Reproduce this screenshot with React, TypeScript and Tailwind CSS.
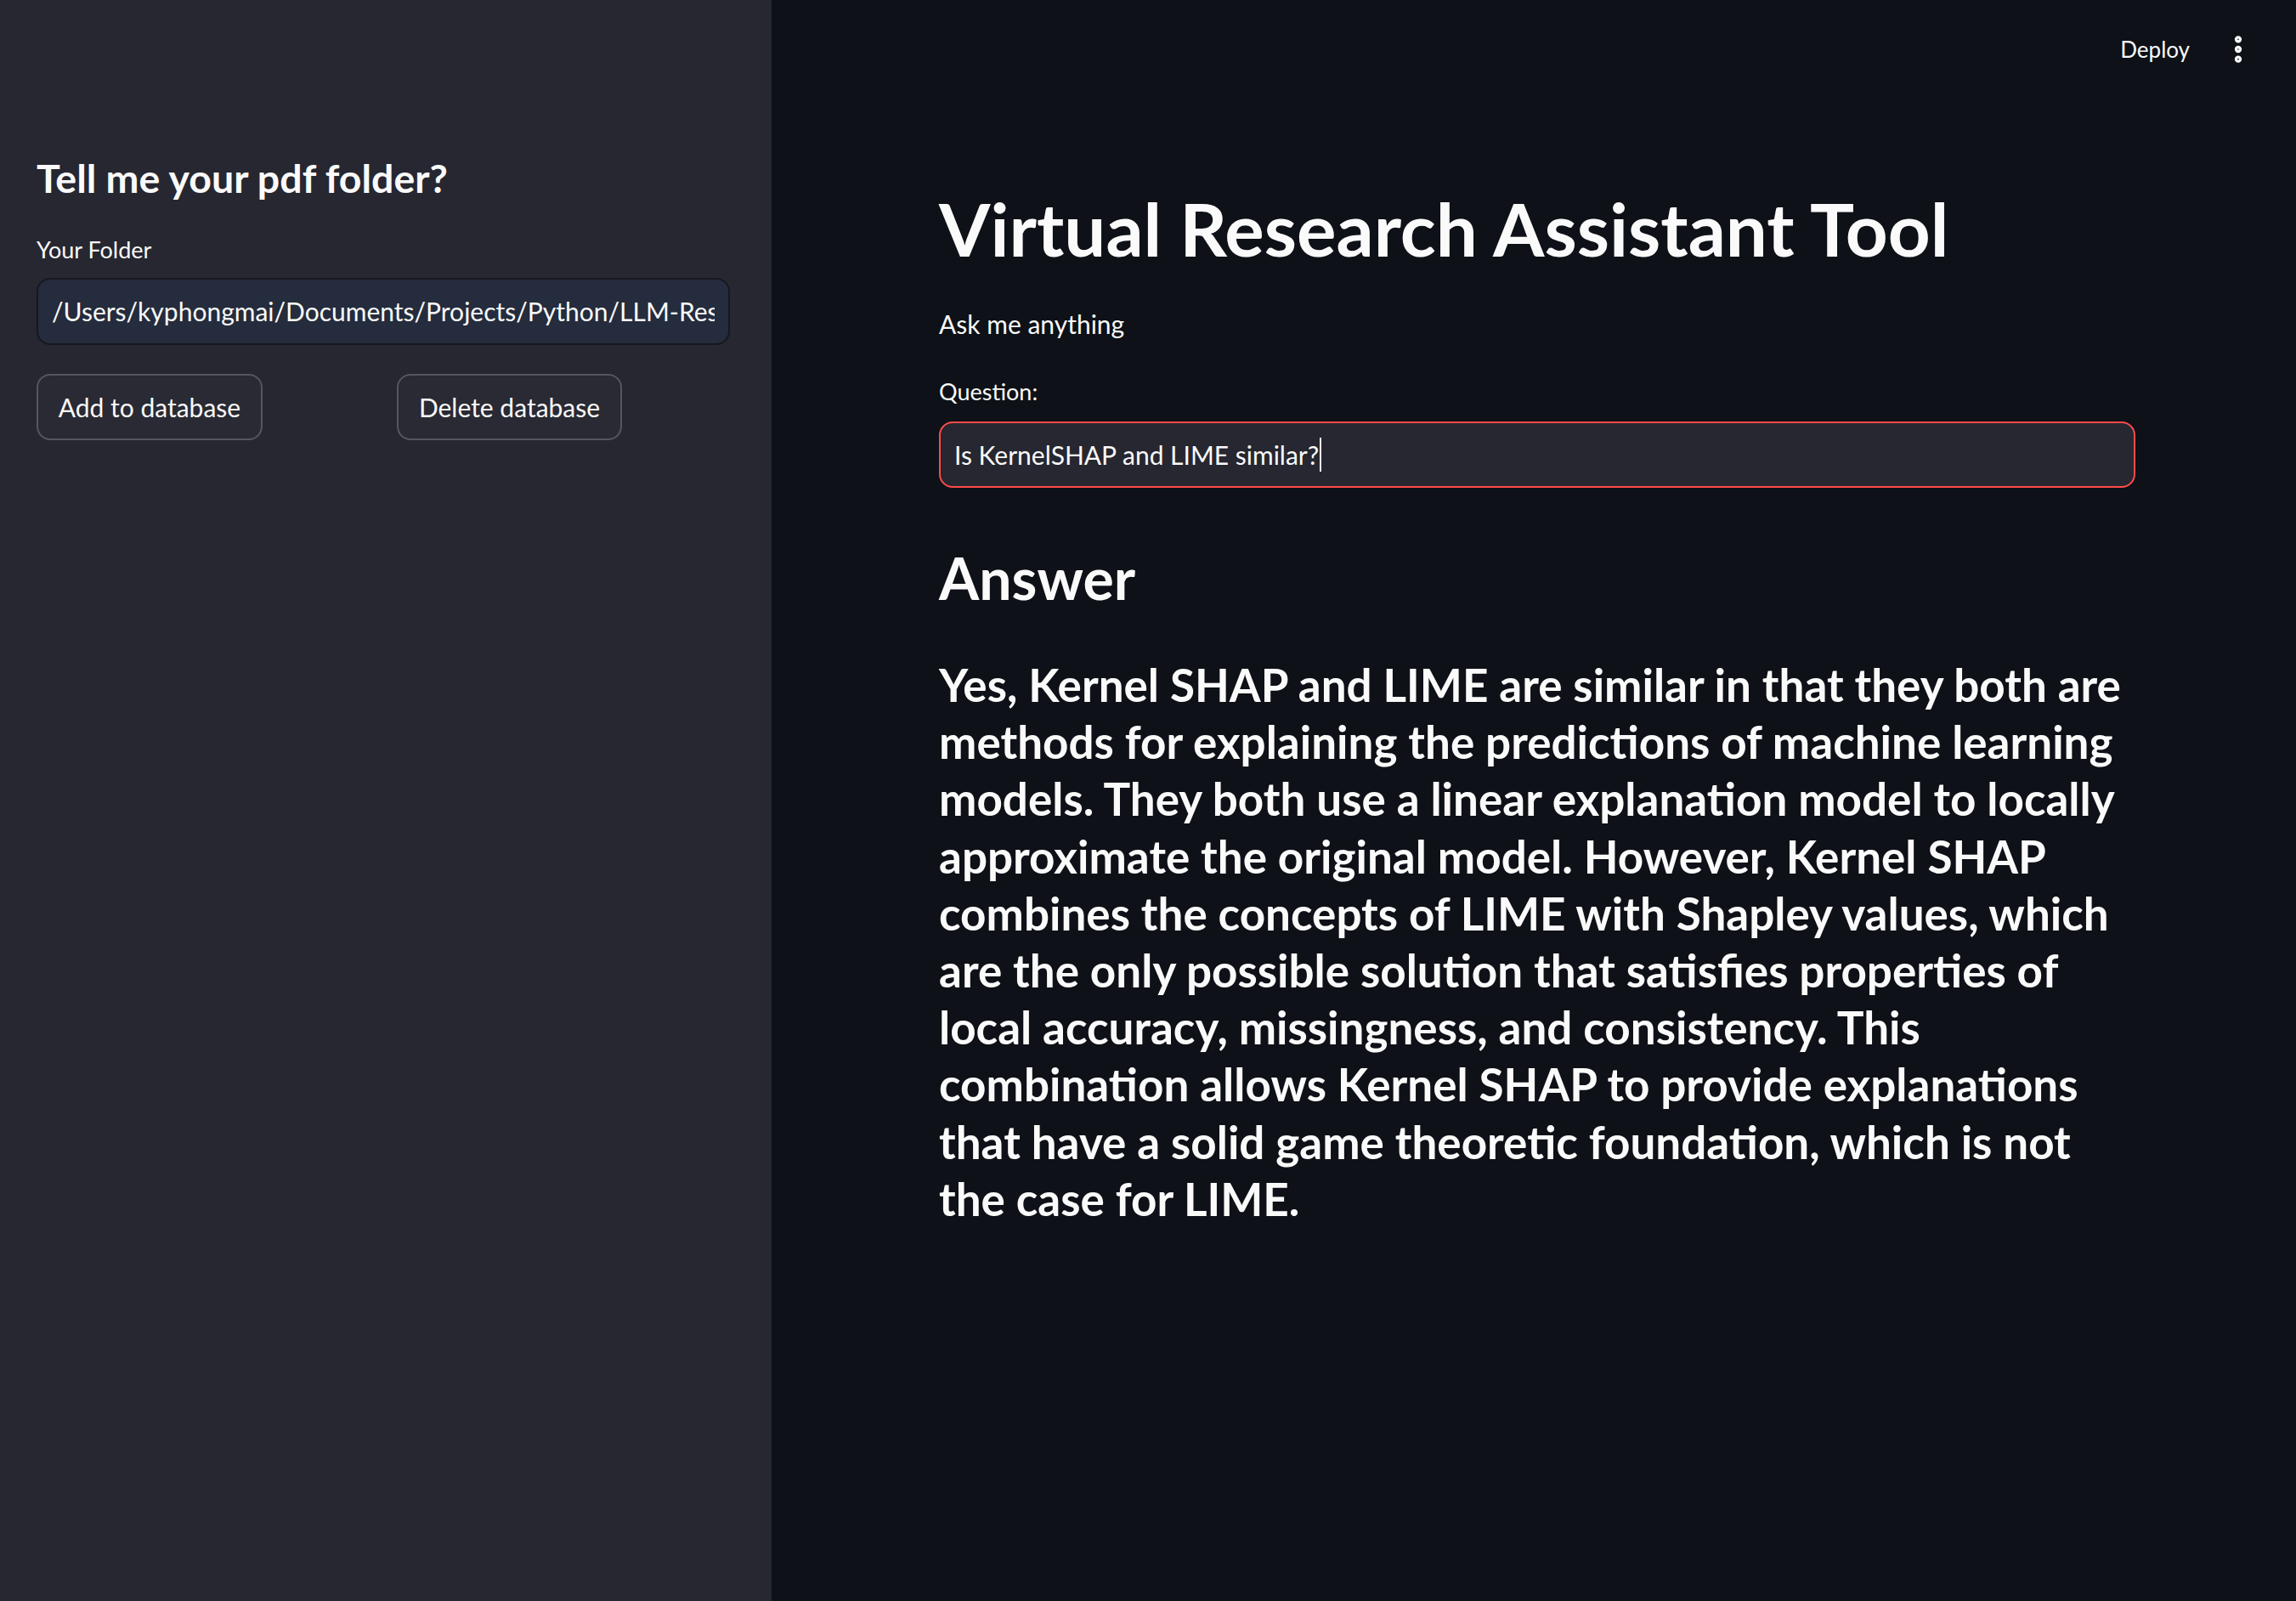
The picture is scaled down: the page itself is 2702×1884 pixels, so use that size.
import { EllipsisVertical } from "lucide-react";

const answerLines = [
  "Yes, Kernel SHAP and LIME are similar in that they both are",
  "methods for explaining the predictions of machine learning",
  "models. They both use a linear explanation model to locally",
  "approximate the original model. However, Kernel SHAP",
  "combines the concepts of LIME with Shapley values, which",
  "are the only possible solution that satisfies properties of",
  "local accuracy, missingness, and consistency. This",
  "combination allows Kernel SHAP to provide explanations",
  "that have a solid game theoretic foundation, which is not",
  "the case for LIME.",
];

function Sidebar() {
  return (
    <aside className="w-[908px] shrink-0 bg-[#262730] pl-[43px] pr-[49px] pt-[180px]">
      <h2 className="text-[46.5px] font-bold leading-[58px] text-[#fafafa]">
        Tell me your pdf folder?
      </h2>

      <label className="mt-[36px] block text-[27px] leading-[40px] text-[#fafafa]">
        Your Folder
      </label>
      <div className="mt-[13px] flex h-[79px] items-center rounded-[16px] border-2 border-[#17181f] bg-[#242c3d] px-[16px]">
        <div className="overflow-hidden whitespace-nowrap text-[30px] text-[#fafafa]">
          /Users/kyphongmai/Documents/Projects/Python/LLM-Research-Assistant/papers
        </div>
      </div>

      {/* two streamlit columns */}
      <div className="mt-[34px] grid grid-cols-2 gap-x-[32px]">
        <div>
          <button className="flex h-[78px] w-[266px] items-center justify-center rounded-[16px] border-2 border-[#55565e] bg-[#292a33] text-[30px] text-[#fafafa]">
            Add to database
          </button>
        </div>
        <div>
          <button className="flex h-[78px] w-[265px] items-center justify-center rounded-[16px] border-2 border-[#55565e] bg-[#292a33] text-[30px] text-[#fafafa]">
            Delete database
          </button>
        </div>
      </div>
    </aside>
  );
}

export default function App() {
  return (
    <div className="flex h-screen w-full font-['Lato','Liberation_Sans',sans-serif] antialiased">
      <Sidebar />

      <main className="flex min-w-0 flex-1 flex-col bg-[#0e1117] text-[#fafafa]">
        {/* Header */}
        <div className="flex h-[116px] items-center justify-end gap-[37px] pr-[48px]">
          <span className="text-[26px] leading-[40px]">Deploy</span>
          <EllipsisVertical className="h-[40px] w-[40px]" strokeWidth={3} />
        </div>

        {/* Content */}
        <div className="ml-[197px] w-[1408px]">
          <h1 className="mt-[103px] whitespace-nowrap text-[87px] font-bold leading-[100px]">
            Virtual Research Assistant Tool
          </h1>

          <p className="mt-[38px] text-[30px] leading-[48px]">Ask me anything</p>

          <label className="mt-[36px] block text-[27px] leading-[40px]">Question:</label>
          <div className="mt-[15px] flex h-[78px] items-center rounded-[16px] border-2 border-[#ff4b4b] bg-[#262730] px-[16px]">
            <span className="whitespace-nowrap text-[30px]">Is KernelSHAP and LIME similar?</span>
            <span className="ml-[1px] h-[40px] w-[2px] bg-[#fafafa]" />
          </div>

          <h2 className="mt-[63px] text-[68px] font-bold leading-[86px]">Answer</h2>

          <h3 className="mt-[49px] text-[53px] font-bold leading-[67.2px]">
            {answerLines.map((line) => (
              <span key={line} className="block whitespace-nowrap">
                {line}
              </span>
            ))}
          </h3>
        </div>
      </main>
    </div>
  );
}
